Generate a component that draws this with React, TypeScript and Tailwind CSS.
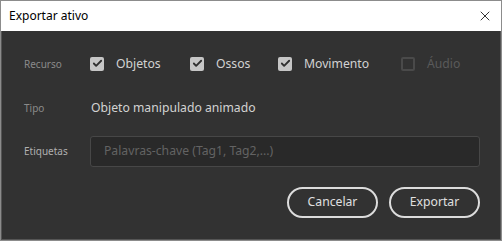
import { Check, X } from "lucide-react";

const font = { fontFamily: '"Source Sans Pro", "Noto Sans", sans-serif' };

function Box({ label, checked, disabled }: { label: string; checked?: boolean; disabled?: boolean }) {
  return (
    <div className="flex items-center gap-[12px]">
      <div
        className={
          disabled
            ? "w-[14px] h-[14px] rounded-[2px] border-2 border-[#4a4a4a]"
            : "w-[14px] h-[14px] rounded-[2px] bg-[#c6c6c6] flex items-center justify-center"
        }
      >
        {checked && <Check className="w-[11px] h-[11px] text-[#2f2f2f]" strokeWidth={4} />}
      </div>
      <span className={disabled ? "text-[#5a5a5a]" : "text-[#d2d2d2]"}>{label}</span>
    </div>
  );
}

export default function App() {
  return (
    <div className="w-[502px] h-[241px] border border-[#8c8c8c] flex flex-col overflow-hidden">
      <div
        className="h-[30px] bg-white flex items-center justify-between pl-[8px] pr-[8px] shrink-0"
        style={{ fontFamily: '"Segoe UI", "Noto Sans", sans-serif' }}
      >
        <span className="text-[12px] text-black">Exportar ativo</span>
        <X className="w-[16px] h-[16px] text-black" strokeWidth={1.2} />
      </div>
      <div className="flex-1 bg-[#323232] border-x border-b border-[#555] pl-[22px] pr-[20px] pt-[22px]" style={font}>
        <div className="flex items-center h-[22px] text-[12.2px]">
          <span className="w-[66px] text-[10px] text-[#8a8a8a]">Recurso</span>
          <div className="flex items-center">
            <div className="w-[100px]"><Box label="Objetos" checked /></div>
            <div className="w-[88px]"><Box label="Ossos" checked /></div>
            <div className="w-[123px]"><Box label="Movimento" checked /></div>
            <Box label="Áudio" disabled />
          </div>
        </div>
        <div className="flex items-center h-[22px] mt-[22px] text-[12.2px]">
          <span className="w-[67px] text-[10px] text-[#8a8a8a]">Tipo</span>
          <span className="text-[#d2d2d2]">Objeto manipulado animado</span>
        </div>
        <div className="flex items-center mt-[17px]">
          <span className="w-[66px] text-[10px] text-[#b0b0b0]">Etiquetas</span>
          <div className="flex-1 h-[31px] rounded-[3px] border border-[#474747] bg-[#292929] flex items-center pl-[13px] text-[12.2px] text-[#636363]">
            Palavras-chave (Tag1, Tag2,...)
          </div>
        </div>
        <div className="flex justify-end gap-[11px] mt-[20px]">
          <button className="w-[91px] h-[31px] rounded-full border-2 border-[#dcdcdc] text-[12.2px] text-[#e0e0e0]">
            Cancelar
          </button>
          <button className="w-[91px] h-[31px] rounded-full border-2 border-[#dcdcdc] text-[12.2px] text-[#e0e0e0]">
            Exportar
          </button>
        </div>
      </div>
    </div>
  );
}
